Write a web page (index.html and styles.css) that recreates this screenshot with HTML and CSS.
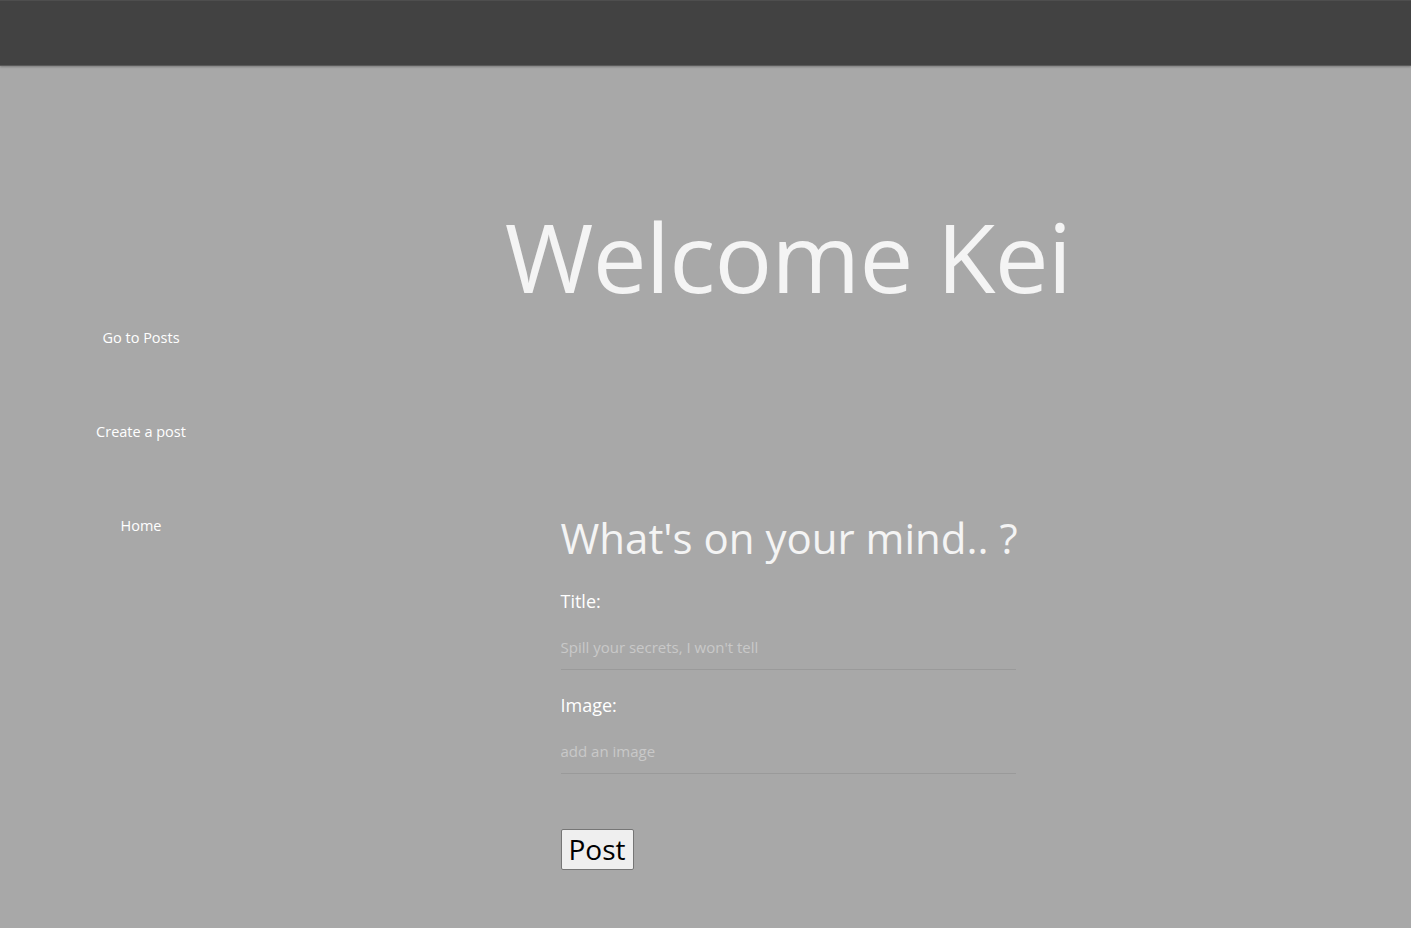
FILE: index.html
```html
<!DOCTYPE html>
<html>
<head>
<meta charset="utf-8">
<link rel="stylesheet" href="styles.css">
</head>
<body>
<header class="topbar"></header>
<div class="layout">
  <nav class="sidebar">
    <a class="nav-link" href="#">Go to Posts</a>
    <a class="nav-link" href="#">Create a post</a>
    <a class="nav-link" href="#">Home</a>
  </nav>
  <main class="main">
    <h1 class="welcome">Welcome Kei</h1>
    <form class="post-form">
      <h2 class="form-title">What's on your mind.. ?</h2>
      <label class="field-label" for="title">Title:</label>
      <input class="field-input" id="title" type="text" placeholder="Spill your secrets, I won't tell">
      <label class="field-label" for="image">Image:</label>
      <input class="field-input" id="image" type="text" placeholder="add an image">
      <button class="post-btn" type="button">Post</button>
    </form>
  </main>
</div>
</body>
</html>
```

FILE: styles.css
```css
html, body {
  margin: 0;
  padding: 0;
}
body {
  background: #a8a8a8;
  font-family: "Open Sans", "Noto Sans", sans-serif;
  color: #f4f4f4;
  height: 928px;
  overflow: hidden;
}
.topbar {
  height: 64px;
  background: #424242;
  border-top: 1px solid #4e4e4e;
  box-shadow: 0 1px 2px rgba(0,0,0,0.25);
  border-bottom: 1px solid #5a5a5a;
}
.layout {
  display: flex;
}
.sidebar {
  width: 282px;
  flex: none;
  display: flex;
  flex-direction: column;
  align-items: center;
  padding-top: 261px;
  gap: 72px;
}
.nav-link {
  color: #ffffff;
  text-decoration: none;
  font-size: 14.5px;
  line-height: 22px;
}
.main {
  width: 1012px;
  display: flex;
  flex-direction: column;
  align-items: center;
}
.welcome {
  margin: 130px 0 0;
  font-weight: 400;
  font-size: 96px;
  line-height: 120px;
  color: #f4f4f4;
  letter-spacing: -0.8px;
}
.post-form {
  margin-top: 193px;
  width: 455px;
  display: flex;
  flex-direction: column;
  align-items: flex-start;
}
.form-title {
  margin: 0;
  font-weight: 400;
  font-size: 42px;
  line-height: 57px;
  color: #f4f4f4;
  letter-spacing: 0;
  white-space: nowrap;
}
.field-label {
  margin-top: 22px;
  font-size: 18px;
  line-height: 26px;
  color: #ffffff;
}
.field-input {
  width: 455px;
  box-sizing: border-box;
  margin-top: 22px;
  background: transparent;
  border: none;
  border-bottom: 1px solid #9a9a9a;
  outline: none;
  padding: 0 0 11px;
  font-family: inherit;
  font-size: 15px;
  line-height: 22px;
  color: #333;
}
.field-input::placeholder {
  color: #c9c9c9;
}
.post-btn {
  margin-top: 55px;
  font-family: inherit;
  font-size: 28px;
  line-height: 39px;
  padding: 0 7px;
  color: #000;
  background: #efefef;
  border: 1px solid #767676;
  border-radius: 2px;
}
```
